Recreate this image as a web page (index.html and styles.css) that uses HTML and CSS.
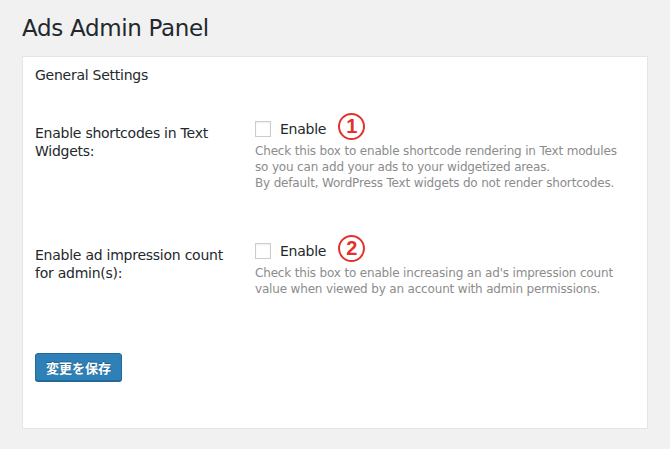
FILE: index.html
```html
<!DOCTYPE html>
<html lang="en">
<head>
    <meta charset="UTF-8">
    <meta name="viewport" content="width=device-width, initial-scale=1.0">
    <title>Ads Admin Panel</title>
    <link rel="stylesheet" href="styles.css">
</head>
<body>
    <h1>Ads Admin Panel</h1>
    <form class="panel" action="#" method="post">
        <h2>General Settings</h2>

        <div class="form-row first">
            <label class="row-label" for="shortcodes">Enable shortcodes in Text Widgets:</label>
            <div class="row-field">
                <div class="check-line">
                    <input type="checkbox" id="shortcodes" name="shortcodes">
                    <label for="shortcodes">Enable</label>
                    <span class="marker">1</span>
                </div>
                <p class="description">
                    Check this box to enable shortcode rendering in Text modules<br>
                    so you can add your ads to your widgetized areas.<br>
                    By default, WordPress Text widgets do not render shortcodes.
                </p>
            </div>
        </div>

        <div class="form-row">
            <label class="row-label" for="impressions">Enable ad impression count for admin(s):</label>
            <div class="row-field">
                <div class="check-line">
                    <input type="checkbox" id="impressions" name="impressions">
                    <label for="impressions">Enable</label>
                    <span class="marker">2</span>
                </div>
                <p class="description">
                    Check this box to enable increasing an ad's impression count<br>
                    value when viewed by an account with admin permissions.
                </p>
            </div>
        </div>

        <div class="actions">
            <button type="submit">変更を保存</button>
        </div>
    </form>
</body>
</html>
```

FILE: styles.css
```css
body {
    margin: 0;
    padding: 0 22px;
    background-color: #f1f1f1;
    color: #23282d;
    font-family: "DejaVu Sans", Verdana, sans-serif;
}
h1 {
    margin: 14px 0 13px;
    font-size: 23px;
    font-weight: normal;
    line-height: 29px;
    letter-spacing: -0.33px;
}
.panel {
    width: 600px;
    padding: 9px 12px 47px;
    background: white;
    border: 1px solid #e5e5e5;
    box-shadow: 0 1px 1px rgba(0, 0, 0, 0.04);
}
h2 {
    margin: 0 0 36px;
    font-size: 14px;
    font-weight: normal;
    line-height: 18px;
    letter-spacing: -0.25px;
}
.form-row {
    display: grid;
    grid-template-columns: 220px 1fr;
    margin-top: 51px;
}
.form-row.first {
    margin-top: 0;
}
.row-label {
    padding-top: 4px;
    width: 200px;
    font-size: 14px;
    line-height: 18px;
    letter-spacing: -0.25px;
}
.check-line {
    display: flex;
    align-items: center;
    height: 18px;
    font-size: 14px;
    letter-spacing: -0.25px;
}
.check-line input {
    appearance: none;
    width: 16px;
    height: 16px;
    margin: 0 9px 0 0;
    border: 1px solid #c9cdd1;
    background: white;
    box-shadow: inset 0 1px 2px rgba(0, 0, 0, 0.07);
}
.marker {
    display: flex;
    align-items: center;
    justify-content: center;
    width: 23px;
    height: 23px;
    margin: -5px 0 0 12px;
    border: 2.5px solid #e4312e;
    border-radius: 50%;
    color: #e4312e;
    font-family: "Liberation Sans", Arial, sans-serif;
    font-size: 20px;
    font-weight: bold;
    letter-spacing: 0;
}
.description {
    margin: 5px 0 0;
    color: #8c8c8c;
    font-size: 12px;
    line-height: 16px;
    letter-spacing: -0.17px;
}
.actions {
    margin-top: 56px;
}
button {
    height: 28px;
    padding: 0 10px;
    background-color: #2f80b7;
    color: white;
    border: 1px solid #22699a;
    border-radius: 3px;
    box-shadow: 0 1px 0 #22699a;
    text-shadow: 0 -1px 1px #1e5f8c;
    font-family: "Noto Sans CJK JP", sans-serif;
    font-size: 13px;
    font-weight: bold;
    cursor: pointer;
}
```
